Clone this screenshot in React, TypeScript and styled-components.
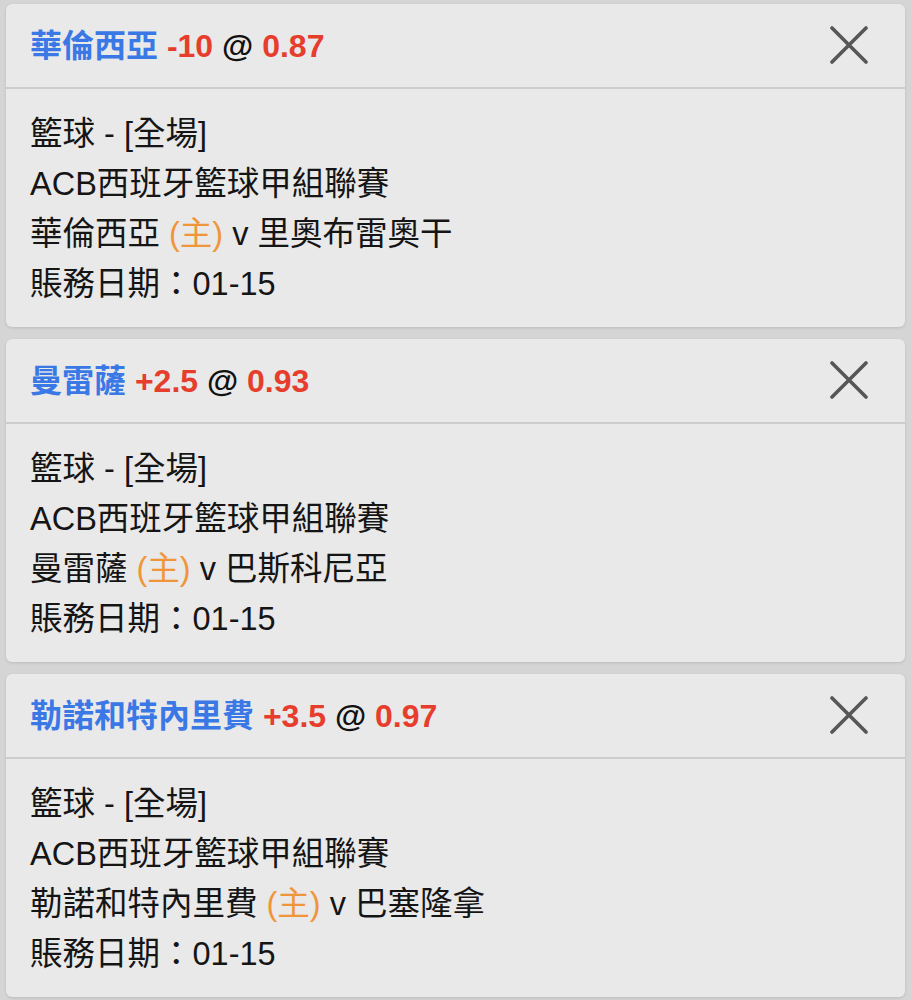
import styled, { createGlobalStyle } from 'styled-components';

const GlobalStyle = createGlobalStyle`
  html, body {
    margin: 0;
    padding: 0;
    background: #d5d5d5;
  }
  body {
    font-family: "Liberation Sans", Arial, "Noto Sans CJK TC", sans-serif;
  }
`;

const Page = styled.div`
  display: flex;
  flex-direction: column;
  gap: 12px;
  padding: 4px 7px 4px 6px;
`;

const Card = styled.div`
  background: #e9e9e9;
  border-radius: 6px;
  box-shadow: 0 1px 3px rgba(0, 0, 0, 0.12);
  overflow: hidden;
`;

const Header = styled.div`
  display: flex;
  align-items: center;
  justify-content: space-between;
  height: 83px;
  padding: 0 37px 0 24px;
  border-bottom: 2px solid #cdcdcd;
`;

const Title = styled.div`
  font-size: 32px;
  font-weight: bold;
  color: #111;
  white-space: nowrap;
  margin-bottom: 5px;
`;

const Team = styled.span`
  color: #3a78e6;
`;

const Odds = styled.span`
  color: #e63d2c;
`;

const CloseButton = styled.button`
  display: flex;
  align-items: center;
  justify-content: center;
  width: 38px;
  height: 38px;
  padding: 0;
  border: none;
  background: transparent;
  cursor: pointer;
  margin-bottom: 2px;
`;

const Body = styled.div`
  padding: 20px 24px 18px;
`;

const Line = styled.div`
  font-size: 32.5px;
  line-height: 50px;
  color: #151515;
  white-space: nowrap;
`;

const Home = styled.span`
  color: #f0963a;
`;

interface Bet {
  team: string;
  handicap: string;
  price: string;
  away: string;
}

const bets: Bet[] = [
  { team: '華倫西亞', handicap: '-10', price: '0.87', away: '里奧布雷奧干' },
  { team: '曼雷薩', handicap: '+2.5', price: '0.93', away: '巴斯科尼亞' },
  { team: '勒諾和特內里費', handicap: '+3.5', price: '0.97', away: '巴塞隆拿' },
];

function CloseIcon() {
  return (
    <svg width="38" height="38" viewBox="0 0 38 38">
      <path
        d="M2 2 L36 36 M36 2 L2 36"
        stroke="#565656"
        strokeWidth="3.6"
        strokeLinecap="round"
      />
    </svg>
  );
}

export default function App() {
  return (
    <>
      <GlobalStyle />
      <Page>
        {bets.map((bet) => (
          <Card key={bet.team}>
            <Header>
              <Title>
                <Team>{bet.team}</Team> <Odds>{bet.handicap}</Odds> @ <Odds>{bet.price}</Odds>
              </Title>
              <CloseButton>
                <CloseIcon />
              </CloseButton>
            </Header>
            <Body>
              <Line>籃球 - [全場]</Line>
              <Line>ACB西班牙籃球甲組聯賽</Line>
              <Line>
                {bet.team} <Home>(主)</Home> v {bet.away}
              </Line>
              <Line>賬務日期：01-15</Line>
            </Body>
          </Card>
        ))}
      </Page>
    </>
  );
}
